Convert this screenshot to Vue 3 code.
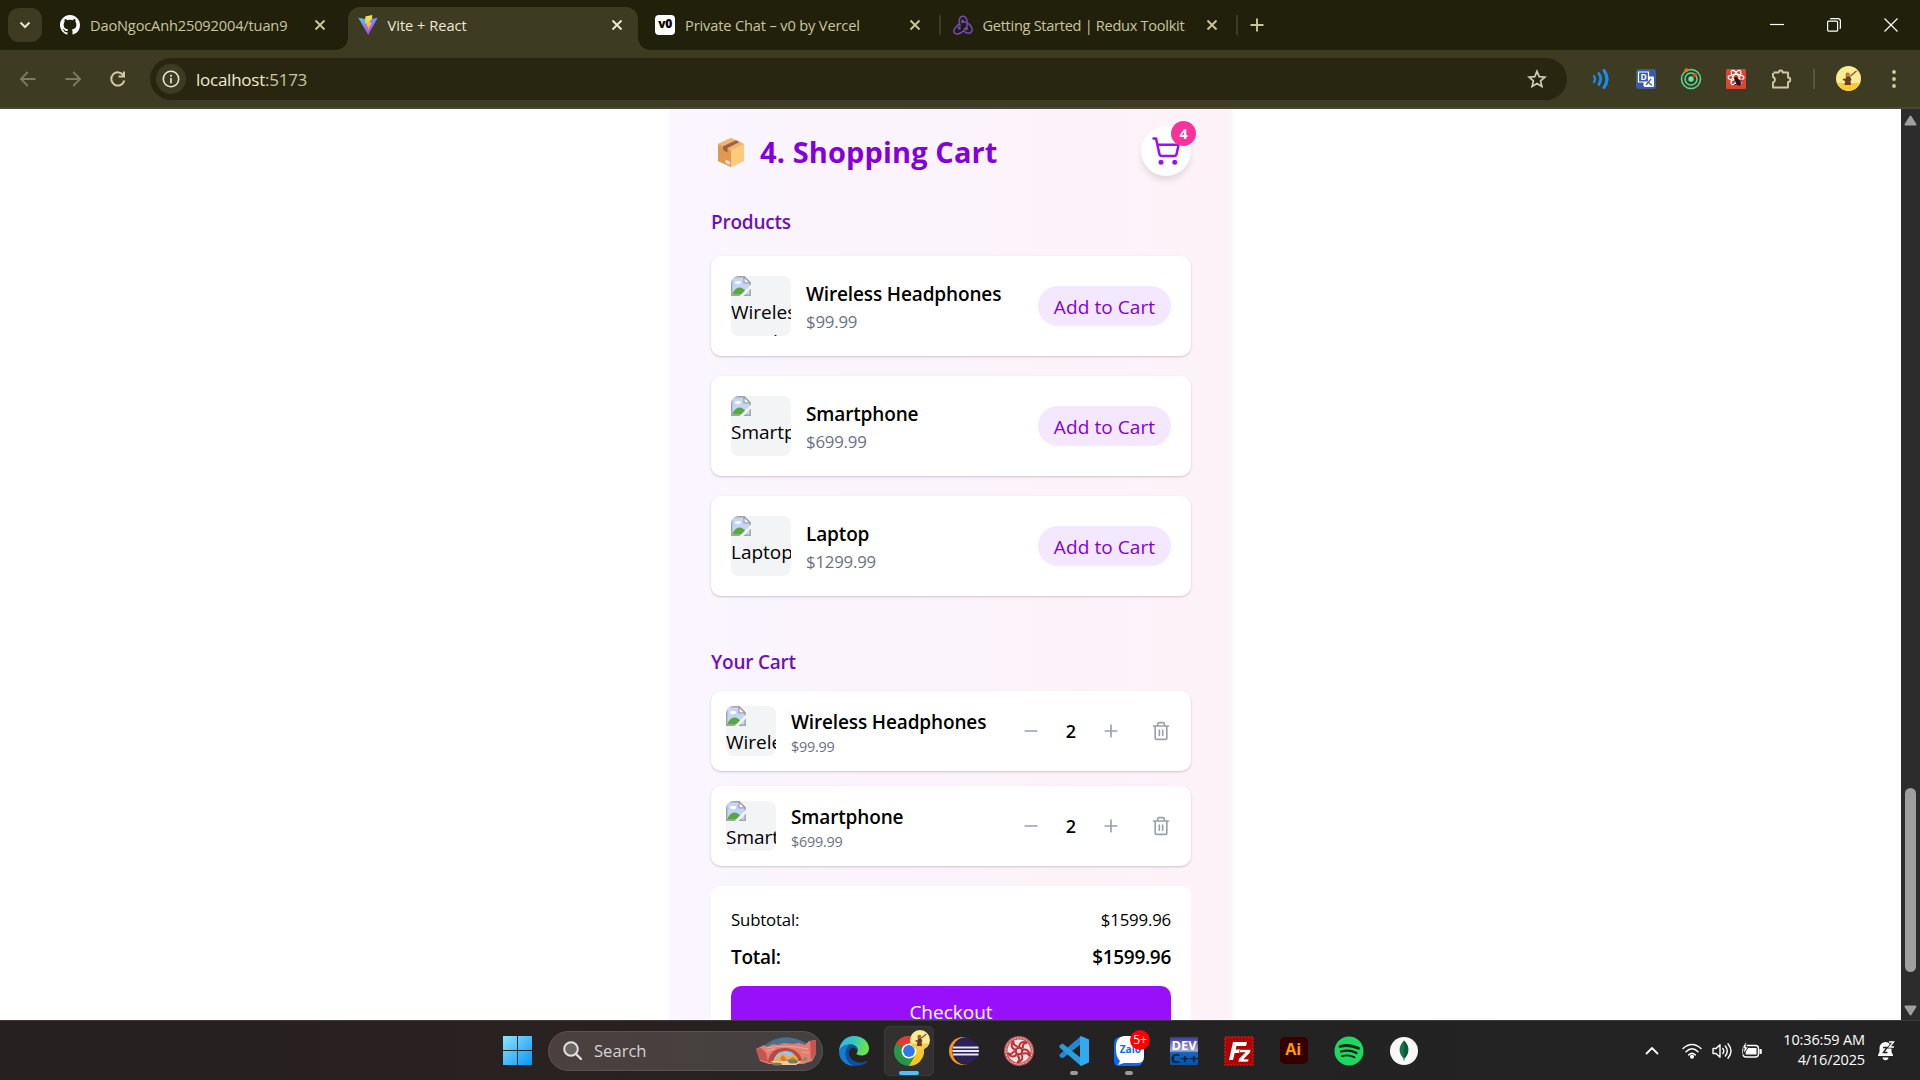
<script setup>
const tabs = [
  { title: 'DaoNgocAnh25092004/tuan9', icon: 'github' },
  { title: 'Vite + React', icon: 'vite', active: true },
  { title: 'Private Chat – v0 by Vercel', icon: 'v0', sep: true },
  { title: 'Getting Started | Redux Toolkit', icon: 'redux', sep: true }
]
const products = [
  { name: 'Wireless Headphones', price: '$99.99' },
  { name: 'Smartphone', price: '$699.99' },
  { name: 'Laptop', price: '$1299.99' }
]
const cart = [
  { name: 'Wireless Headphones', price: '$99.99', qty: 2 },
  { name: 'Smartphone', price: '$699.99', qty: 2 }
]
const blades = [0, 72, 144, 216, 288]
</script>

<template>
  <div class="screen">
    <header class="tabstrip">
      <button class="tab-search">
        <svg width="12" height="8" viewBox="0 0 12 8"><path d="M1.500 1.500 6 6l4.500-4.500" fill="none" stroke="#e9e6c4" stroke-width="2" /></svg>
      </button>
      <div v-for="t in tabs" :key="t.title" class="tab" :class="[t.icon, { active: t.active, sep: t.sep }]">
        <svg v-if="t.icon === 'github'" class="fav" viewBox="0 0 16 16"><path fill="#fff" d="M8 0C3.580 0 0 3.580 0 8c0 3.540 2.290 6.530 5.470 7.590.4.070.55-.17.55-.38 0-.19-.01-.82-.01-1.490-2.010.37-2.530-.49-2.690-.94-.09-.23-.48-.94-.82-1.130-.28-.15-.68-.52-.01-.53.63-.01 1.080.58 1.230.82.72 1.210 1.870.87 2.330.66.07-.52.28-.87.51-1.070-1.780-.2-3.640-.89-3.640-3.950 0-.87.31-1.590.82-2.150-.08-.2-.36-1.020.08-2.120 0 0 .67-.21 2.200.82.64-.18 1.320-.27 2-.27s1.360.09 2 .27c1.530-1.040 2.200-.82 2.200-.82.44 1.100.16 1.920.08 2.120.51.56.82 1.270.82 2.150 0 3.070-1.870 3.750-3.650 3.950.29.25.54.73.54 1.480 0 1.070-.01 1.930-.01 2.200 0 .21.15.46.55.38A8.010 8.010 0 0 0 16 8c0-4.420-3.580-8-8-8z" /></svg>
        <svg v-else-if="t.icon === 'vite'" class="fav" viewBox="0 0 20 20">
          <defs>
            <linearGradient id="va" x1="0" y1="0" x2=".6" y2="1"><stop offset="0" stop-color="#41d1ff" /><stop offset="1" stop-color="#bd34fe" /></linearGradient>
            <linearGradient id="vb" x1="0" y1="0" x2="0" y2="1"><stop offset="0" stop-color="#ffea53" /><stop offset="1" stop-color="#ffa800" /></linearGradient>
          </defs>
          <path d="M.3 2.800 10 4.400l9.700-1.600L10.200 20z" fill="url(#va)" />
          <path d="m14.300.1-6.900 1.400-.5 7.300 2.300-.4-.7 3.300 1.900-.5-.9 5.400 4.300-8.800-2.300.3 1-3.300 1.400-.4z" fill="url(#vb)" />
        </svg>
        <span v-else-if="t.icon === 'v0'" class="fav v0-logo">v0</span>
        <svg v-else class="fav" viewBox="0 0 20 20" fill="none" stroke="#764abc" stroke-width="1.500" stroke-linecap="round">
          <path d="M13.600 13c1.500-6 .2-11.500-3.400-11.700C6.600 1.200 5 5.800 7 10.200" />
          <path d="M6.500 9C2 11.500-.3 16 1.500 18.100c2.200 2.300 8.600-.2 11-5.100" />
          <path d="M9.300 6.400c5.500.4 10.300 4.600 9.800 8.800-.6 3.700-4.800 4.100-8.100 1.100" />
          <circle cx="9.600" cy="6.500" r=".9" /><circle cx="6.200" cy="12.900" r=".9" /><circle cx="13.400" cy="13.600" r=".9" />
        </svg>
        <span class="tab-title">{{ t.title }}</span>
        <svg class="tab-close" viewBox="0 0 12 12"><path d="m1.500 1.500 9 9m0-9-9 9" stroke="currentColor" stroke-width="1.900" /></svg>
      </div>
      <svg class="new-tab" viewBox="0 0 14 14"><path d="M7 .5v13M.5 7h13" stroke="#c9c69e" stroke-width="1.900" /></svg>
      <div class="window-controls">
        <svg width="14" height="14" viewBox="0 0 14 14"><path d="M0 6.500h14" stroke="#fff" stroke-width="1.200" /></svg>
        <svg width="14" height="14" viewBox="0 0 14 14" fill="none" stroke="#fff" stroke-width="1.200"><rect x=".6" y="3.200" width="10" height="10" rx="1" /><path d="M3.200 1.200c.3-.4.8-.6 1.300-.6h6.400c1.400 0 2.500 1.100 2.500 2.500V9.500c0 .6-.3 1-.7 1.300" /></svg>
        <svg width="14" height="14" viewBox="0 0 14 14"><path d="m.5.5 13 13m0-13-13 13" stroke="#fff" stroke-width="1.200" /></svg>
      </div>
    </header>

    <div class="toolbar">
      <svg class="nav" viewBox="0 0 20 20"><path d="M17.500 10H3M9.800 3 2.900 10l6.900 7" fill="none" stroke="#7d7a5e" stroke-width="1.800" /></svg>
      <svg class="nav" viewBox="0 0 20 20"><path d="M2.500 10H17M10.200 3l6.900 7-6.900 7" fill="none" stroke="#7d7a5e" stroke-width="1.800" /></svg>
      <svg class="nav" viewBox="0 0 20 20"><path d="M15.500 6.500A6.600 6.600 0 1 0 16.300 11.500M16 2.500v5h-5.500" fill="none" stroke="#cfcca3" stroke-width="2" /></svg>
      <div class="omnibox">
        <span class="site-info"><svg width="18" height="18" viewBox="0 0 18 18"><circle cx="9" cy="9" r="7.700" fill="none" stroke="#e9e6cf" stroke-width="1.600" /><path d="M9 8v5.200M9 4.800v1.900" stroke="#e9e6cf" stroke-width="1.700" /></svg></span>
        <span class="url">localhost<span class="port">:5173</span></span>
        <svg class="star" viewBox="0 0 20 20"><path d="m10 2.300 2.200 5.300 5.700.5-4.300 3.800 1.300 5.600L10 14.500l-4.900 3 1.300-5.600-4.300-3.800 5.700-.5z" fill="none" stroke="#cfccb6" stroke-width="1.700" /></svg>
      </div>
      <div class="extensions">
        <svg viewBox="0 0 22 22" fill="none" stroke="#1a8cf0" stroke-linecap="round"><path d="M4 8q2 3 0 6" stroke-width="2.200" /><path d="M8.800 5.500q3.800 5.500 0 11" stroke-width="2.700" /><path d="M14 2.500q6 8.500 0 17" stroke-width="3.200" /></svg>
        <svg viewBox="0 0 22 22"><rect x="1" y="1" width="20" height="20" rx="2.500" fill="#3b5aa6" /><path d="M9.500 8.500H18a1 1 0 0 1 1 1V18a1 1 0 0 1-1 1H9.500l-1-1v-8.500z" fill="#fff" /><path d="M3.500 4h10v10h-10z" fill="#3b5aa6" stroke="#fff" stroke-width="1.200" /><text x="5.400" y="12" font-size="8.500" fill="#fff" class="bold">D</text><path d="m16 11-5 6m2-3 4 3.500" stroke="#3b5aa6" stroke-width="1.200" fill="none" /></svg>
        <svg viewBox="0 0 22 22" fill="none" stroke="#54db91" stroke-width="1.500"><circle cx="11" cy="11" r="9.500" /><circle cx="11" cy="11" r="6" /><circle cx="11" cy="11" r="2.700" fill="#5cf0a0" stroke="none" /><circle cx="6.400" cy="2.200" r="2" fill="#f36b21" stroke="none" /><circle cx="15" cy="7" r="2" fill="#f3471f" stroke="none" /></svg>
        <svg viewBox="0 0 22 22"><rect x="1" y="1" width="20" height="20" rx="1" fill="#dd4433" /><g fill="none" stroke="#fff" stroke-width="1.100"><ellipse cx="11" cy="9.500" rx="8" ry="3" /><ellipse cx="11" cy="9.500" rx="8" ry="3" transform="rotate(60 11 9.500)" /><ellipse cx="11" cy="9.500" rx="8" ry="3" transform="rotate(120 11 9.500)" /></g><ellipse cx="13" cy="14" rx="2.300" ry="4" fill="#2b1512" transform="rotate(-30 13 14)" /><circle cx="11" cy="10.500" r="1.700" fill="#2b1512" /><path d="m8.500 13 9-1m-8 5 7-3.500" stroke="#2b1512" /></svg>
        <svg viewBox="0 0 22 22"><path d="M3.500 4.500h5.200a2 2 0 0 1 4 0h5.300v5a2.200 2.200 0 0 1 0 4.500v5.500H3v-5a2.900 2.900 0 0 0 0-5.500V5" fill="none" stroke="#cfcca3" stroke-width="1.900" stroke-linejoin="round" /></svg>
      </div>
      <i class="toolbar-sep"></i>
      <svg class="avatar" viewBox="0 0 25 25"><circle cx="12.500" cy="12.500" r="12.500" fill="#faec93" /><path d="M1 17h23a12.500 12.500 0 0 1-23 0" fill="#fac934" /><path d="M10 10h4l1.500 4-1 1 .5 4H8.500l.7-4-2.700-1 1-1.500 2 .5z" fill="#6b3d20" /><circle cx="11.700" cy="8.700" r="2.200" fill="#b77a52" /><path d="m14.500 10 6-5" stroke="#8a4927" stroke-width="1.200" /></svg>
      <svg class="kebab" viewBox="0 0 6 20" fill="#cfcca3"><circle cx="3" cy="3" r="1.900" /><circle cx="3" cy="10" r="1.900" /><circle cx="3" cy="17" r="1.900" /></svg>
    </div>

    <main class="viewport">
      <div class="page">
        <section class="panel">
          <div class="panel-head">
            <svg class="box" viewBox="0 0 26 29"><path d="M13 0 26 6v17l-13 6L0 23V6z" fill="#ffc36f" /><path d="M0 6l13 6v17L0 23z" fill="#e0994e" /><path d="M13 12 26 6v17l-13 6z" fill="#ffca7c" /><path d="M13 0 26 6l-13 6L0 6z" fill="#f2b56d" /><path d="m5 8.300 13-6 3.500 1.600-12 6v4.600L5 12z" fill="#9c5f4b" /><path d="M7.500 21.500 12 23.500V27l-4.500-2z" fill="#d8dde5" /></svg>
            <h2>4. Shopping Cart</h2>
            <div class="cart-badge">
              <svg width="30" height="30" viewBox="0 0 24 24" fill="none" stroke="#9810fa" stroke-width="2" stroke-linecap="round" stroke-linejoin="round"><path d="M2.050 2.050h2l2.660 12.420a2 2 0 0 0 2 1.580h9.780a2 2 0 0 0 1.950-1.570l1.650-7.430H5.120" /><circle cx="8" cy="21" r="1" fill="#9810fa" /><circle cx="19" cy="21" r="1" fill="#9810fa" /></svg>
              <b>4</b>
            </div>
          </div>

          <h3>Products</h3>
          <div class="product-list">
            <article v-for="p in products" :key="p.name" class="card product">
              <div class="thumb"><svg viewBox="0 0 20 20"><path d="M.7 1.600Q.7.700 1.600.7H13l6.200 6.200V19.300H.7z" fill="#c3d6f8" stroke="#a3a3a3" stroke-width="1.400" /><path d="M13 .7v6.200h6.200z" fill="#fff" stroke="#a3a3a3" stroke-width="1.400" /><ellipse cx="7" cy="6.500" rx="3" ry="1.700" fill="#fff" /><path d="M1.400 18.600c1-4 4-7 7-7 2.500 0 4.500 1.500 6 3.500v3.500z" fill="#57a93f" /><path d="M20 8.500v4L12.500 20H8.500z" fill="#f3f4f6" /></svg><p>{{ p.name }}</p></div>
              <div class="info"><h4>{{ p.name }}</h4><p>{{ p.price }}</p></div>
              <button class="add">Add to Cart</button>
            </article>
          </div>

          <h3 class="cart-title">Your Cart</h3>
          <div class="cart-list">
            <article v-for="c in cart" :key="c.name" class="card line">
              <div class="thumb small"><svg viewBox="0 0 20 20"><path d="M.7 1.600Q.7.700 1.600.7H13l6.200 6.200V19.300H.7z" fill="#c3d6f8" stroke="#a3a3a3" stroke-width="1.400" /><path d="M13 .7v6.200h6.200z" fill="#fff" stroke="#a3a3a3" stroke-width="1.400" /><ellipse cx="7" cy="6.500" rx="3" ry="1.700" fill="#fff" /><path d="M1.400 18.600c1-4 4-7 7-7 2.500 0 4.500 1.500 6 3.500v3.500z" fill="#57a93f" /><path d="M20 8.500v4L12.500 20H8.500z" fill="#f3f4f6" /></svg><p>{{ c.name }}</p></div>
              <div class="info"><h4>{{ c.name }}</h4><p>{{ c.price }}</p></div>
              <div class="stepper">
                <svg viewBox="0 0 24 24"><path d="M5 12h14" /></svg>
                <span>{{ c.qty }}</span>
                <svg viewBox="0 0 24 24"><path d="M5 12h14M12 5v14" /></svg>
                <svg class="trash" viewBox="0 0 24 24"><path d="M3 6h18M19 6v14c0 1-1 2-2 2H7c-1 0-2-1-2-2V6M8 6V4c0-1 1-2 2-2h4c1 0 2 1 2 2v2M10 11v6M14 11v6" /></svg>
              </div>
            </article>
          </div>

          <div class="summary">
            <div class="row"><span>Subtotal:</span><span>$1599.96</span></div>
            <div class="row total"><span>Total:</span><span>$1599.96</span></div>
            <button class="checkout">Checkout</button>
          </div>
        </section>
      </div>
      <div class="scrollbar">
        <svg width="13" height="11" viewBox="0 0 13 11"><path d="M6.500 1.500 11.500 9.500H1.500z" fill="#9f9f9f" stroke="#9f9f9f" stroke-width="2" stroke-linejoin="round" /></svg>
        <i class="thumb-bar"></i>
        <svg width="13" height="11" viewBox="0 0 13 11"><path d="M6.500 9.500 11.500 1.500H1.500z" fill="#9f9f9f" stroke="#9f9f9f" stroke-width="2" stroke-linejoin="round" /></svg>
      </div>
    </main>

    <footer class="taskbar">
      <svg class="start" viewBox="0 0 29 29"><defs><linearGradient id="win" x1="0" y1="0" x2="1" y2="1"><stop offset="0" stop-color="#8be3ff" /><stop offset="1" stop-color="#0a95f5" /></linearGradient></defs><path d="M0 0h14v14H0zM15 0h14v14H15zM0 15h14v14H0zM15 15h14v14H15z" fill="url(#win)" /></svg>
      <div class="search">
        <svg width="19" height="19" viewBox="0 0 19 19" fill="none" stroke="#e2e0e0" stroke-width="2" stroke-linecap="round"><circle cx="8" cy="8" r="6.800" fill="#6a6665" /><path d="m13 13 5 5" stroke-width="2.400" /></svg>
        <span>Search</span>
        <svg class="arch" viewBox="0 0 60 30"><path d="M9 9Q28-6 52 8v12H9z" fill="#4b6f8f" /><path d="M0 13 8 9l3 2 6-3 5 1 6-2 8 1 7-1 6 2 4-4 7-1v14l-4 7-9 3H13L4 25z" fill="#e08073" /><path d="M0 13l5-1 5 5 2 9-8-2zM54 5l6-1v14l-5 6z" fill="#c65552" /><path d="M10 12q20-4 42 1M11 15q4-2 8-2M46 16l7 1" stroke="#f2a896" fill="none" /><path d="M12 26c1-10 8-14 17-14s15 5 17 12l-3 3H14z" fill="#b9483f" /><path d="M17 27c1-8 6-12 13-12 6 0 10 4 12 10l-3 3z" fill="#8ec7ef" /><path d="m17 25 6-5 4-3 5 4 5-3 4 3 2 5-8 3H18z" fill="#f1a94e" /><path d="m24 22 3-3 4 5 6-3 4 3-3 2H26z" fill="#d97e2b" /><path d="M14 25h32l-6 4H22z" fill="#f2cba9" /><ellipse cx="37" cy="25.500" rx="5" ry="2" fill="#6e8355" /><ellipse cx="21" cy="28" rx="5" ry="1.600" fill="#6e8355" /><ellipse cx="49" cy="23" rx="2.500" ry="2" fill="#7f9561" /></svg>
      </div>
      <div class="apps">
        <div class="app"><svg viewBox="0 0 30 30"><defs><linearGradient id="ea" x1="0" y1="0" x2="1" y2=".3"><stop offset="0" stop-color="#2bb6ee" /><stop offset=".5" stop-color="#35c6c4" /><stop offset="1" stop-color="#6be34a" /></linearGradient></defs><path d="M0 16C0 7 6 0 15 0s15 6 15 12.500c0 4.500-3.500 7-7.500 7-3.500 0-5-1.200-5-2 0-.9 1.200-1.300 1.200-3.500 0-3-3-5.500-7-5.500C6 8.500 1.500 11 0 16z" fill="url(#ea)" /><path d="M0 16C1 11.500 6 8.500 11.700 8.500c-3 1.500-5 5-5 9C6.700 24 12 30 17 30h-2C6.500 30 0 23.500 0 16z" fill="#137bd0" /><path d="M12.500 12C10 14 9.500 17 10 19c1.500 5 7 7.500 12 7.500 3 0 5.500-1.500 6-1.500.7 0 .6.600.2 1.100C25.500 29 20 30 17 30 10 29 6.700 23 6.700 17.500c0-4 2-7 5-9 4 0 7 2.500 7 5.500 0 .5-.1 1-.3 1.500-1-2.500-3.500-4.500-5.900-3.500z" fill="#0b50a0" /></svg></div>
        <div class="app current">
          <svg viewBox="0 0 30 30"><circle cx="15" cy="15" r="15" fill="#279847" /><path d="M15 15 2 7.500a15 15 0 0 1 26 0z" fill="#e33b2e" /><path d="M15 7.500h13A15 15 0 0 1 15 30l6.500-11.250z" fill="#fcc61d" /><circle cx="15" cy="15" r="7.500" fill="#fff" /><circle cx="15" cy="15" r="5.900" fill="#2f78e8" /></svg>
          <svg class="profile" viewBox="0 0 25 25"><circle cx="12.500" cy="12.500" r="12.500" fill="#faec93" /><path d="M1 17h23a12.500 12.500 0 0 1-23 0" fill="#f3cb48" /><path d="M10 10h4l1.500 4-1 1 .5 5H8.500l.7-5-2.700-1 1-1.500 2 .5z" fill="#6b3d20" /><circle cx="11.700" cy="8.500" r="2.500" fill="#a0683f" /><path d="m14.500 10 6-5" stroke="#8a4927" stroke-width="1.400" /></svg>
          <i class="line-current"></i>
        </div>
        <div class="app"><svg viewBox="0 0 30 30"><circle cx="14" cy="15" r="14" fill="#f7941e" /><circle cx="17" cy="15" r="13.700" fill="#242222" /><circle cx="17" cy="15" r="12.800" fill="#2c2255" /><path d="M4 10.500h25.500v2H4zM3.500 14h26.500v2H3.500zM4 17.500h25.500v2H4z" fill="#e8e6f2" /></svg></div>
        <div class="app"><svg viewBox="0 0 30 30"><circle cx="15" cy="15" r="15" fill="#c25658" /><circle cx="15" cy="15" r="13.200" fill="none" stroke="#e8d4d4" stroke-width="1" stroke-dasharray="2 1" /><circle cx="15" cy="15" r="11.500" fill="#ece0e0" /><path v-for="a in blades" :key="a" :transform="`rotate(${a} 15 15)`" d="M15 11.200c0-4 3-6.400 8-4.500-3 0-4.500 2-4.200 5.800" fill="none" stroke="#b93337" stroke-width="2" /><circle cx="15" cy="15" r="3.300" fill="#ece0e0" stroke="#b93337" stroke-width="2.200" /></svg></div>
        <div class="app"><svg viewBox="0 0 30 30"><path d="M22 0v8L3.500 22.500.5 20.500v-2z" fill="#2189cf" /><path d="M22 30v-8L3.500 7.500.5 9.500v2z" fill="#2a9ce0" /><path d="M22 0 30 3.500v23L22 30l-1-1V1z" fill="#35a9ee" /></svg><i class="dot"></i></div>
        <div class="app"><svg viewBox="0 0 30 30"><path d="M7 1h16q6 0 6 7v15q0 7-6 7H5q-5 0-5-5V8q0-7 7-7z" fill="#0a68ff" /><path d="M10 0h13q7 0 7 7v14q0 6-7 6H10l-6 2 2-4q-4-4-4-11Q1 1 10 0z" fill="#fff" /><text x="5.800" y="17" font-size="10" fill="#0a68ff" class="bold">Zalo</text></svg><b class="count">5+</b><i class="dot"></i></div>
        <div class="app"><svg viewBox="0 0 30 30"><defs><linearGradient id="dv" x1="0" y1="0" x2="0" y2="1"><stop offset="0" stop-color="#35379c" /><stop offset=".5" stop-color="#a9afd3" /><stop offset=".55" stop-color="#1668bd" /><stop offset="1" stop-color="#0e4f9e" /></linearGradient></defs><path d="M1 1h28v28H1z" fill="url(#dv)" /><text x="2.500" y="14" font-size="11.500" fill="#fff" class="bold" textLength="25" lengthAdjust="spacingAndGlyphs">DEV</text><text x="1.500" y="26.500" font-size="13" fill="#0b2348" class="bold" textLength="28" lengthAdjust="spacingAndGlyphs">C++</text></svg></div>
        <div class="app"><svg viewBox="0 0 30 30"><rect x="1" y="1" width="28" height="28" fill="#b30000" stroke="#d21919" stroke-width="1.500" stroke-dasharray="2 1.200" /><path d="M9 6h14l-1 4h-9.500l-.8 3.500h6l-1 3.500h-6L9 24H5z" fill="#fff" /><path d="M16 13.500h11l-.8 3L20 23h5l-.8 3H14l.8-3.200 6.200-6.200h-5.800z" fill="#fff" stroke="#b30000" stroke-width=".7" /></svg></div>
        <div class="app"><svg viewBox="0 0 30 30"><rect x="1" y="1" width="28" height="27" rx="5" fill="#330000" /><text x="6.200" y="19" font-size="16.500" fill="#ff9a00" class="bold" textLength="16" lengthAdjust="spacingAndGlyphs">Ai</text></svg></div>
        <div class="app"><svg viewBox="0 0 30 30"><circle cx="15" cy="15" r="14.500" fill="#1ed760" /><g fill="none" stroke="#16251b" stroke-linecap="round"><path d="M6 10.500q9-2.700 18.500 1.800" stroke-width="2.800" /><path d="M7 15.500q8.500-2.200 15.500 1.500" stroke-width="2.300" /><path d="M8 20q7-1.700 12.500 1.300" stroke-width="1.900" /></g></svg></div>
        <div class="app"><svg viewBox="0 0 30 30"><circle cx="15" cy="15" r="14" fill="#f7f8f7" /><path d="M15 4.500c4.500 4.500 5.500 9.500 3 14.500-.8 1.600-1.600 2.600-2.500 3.300V24.500h-1v-2.200c-.9-.7-1.700-1.700-2.500-3.300-2.500-5-1.500-10 3-14.500z" fill="#11744b" /><path d="M15 4.500c4.500 4.500 5.500 9.500 3 14.500-.8 1.600-1.600 2.600-3 3.300z" fill="#0a5a3c" /></svg></div>
      </div>
      <div class="tray">
        <svg class="caret" viewBox="0 0 14 9"><path d="m1 8 6-6 6 6" fill="none" stroke="#fff" stroke-width="1.800" /></svg>
        <svg class="ti" viewBox="0 0 20 20" fill="none" stroke="#fff" stroke-width="1.500" stroke-linecap="round"><path d="M1 7.500q9-8 18 0M4 10.800q6-6 12 0M6.800 13.900q3.200-3 6.400 0" /><circle cx="10" cy="15.800" r="1.300" fill="#fff" /></svg>
        <svg class="ti" viewBox="0 0 20 20" fill="none" stroke="#fff" stroke-width="1.400" stroke-linecap="round" stroke-linejoin="round"><path d="M1 7.500h3L8 3.700v12.600L4 12.500H1z" /><path d="M10.800 7.500q2 2.500 0 5M13.300 5q4 5 0 10M16 2.700q6 7.300 0 14.600" /></svg>
        <svg class="ti" viewBox="0 0 20 20"><rect x="1" y="4.500" width="15.500" height="11.500" rx="3" fill="none" stroke="#fff" stroke-width="1.400" /><path d="M4 7h10.500v6.500H3.500z" fill="#fff" /><path d="M17.500 8h1.300q1 0 1 1v3q0 1-1 1h-1.300z" fill="#fff" /><path d="M4.500-.5 0 7h2.200L1 13.500l5.500-7.500H4z" fill="#fff" stroke="#232323" stroke-width="1" /></svg>
        <div class="clock"><span>10:36:59 AM</span><span>4/16/2025</span></div>
        <svg class="bell" viewBox="0 0 18 20"><path d="M1 15v-1l1.500-3V7a6 6 0 0 1 12 0v4l1.500 3v1zM5.500 16.500h6q-.5 2.800-3 2.800t-3-2.800z" fill="#fff" /><path d="M12 1h4.500L12.500 6h4.500" fill="none" stroke="#232323" stroke-width="3" /><path d="M12 1h4.500L12.500 6h4.500" fill="none" stroke="#fff" stroke-width="1.400" /><path d="M6 6.500h4L6.500 11.500h4" fill="none" stroke="#232323" stroke-width="1.500" /></svg>
      </div>
    </footer>
  </div>
</template>

<style>
body { background: #fff; overflow: hidden; }
</style>

<style scoped>
* { box-sizing: border-box; margin: 0; }
svg { display: block; flex: none; }
.bold { font-weight: 700; }
.screen { width: 1920px; height: 1080px; display: flex; flex-direction: column; overflow: hidden; font-family: "Open Sans", "Noto Sans", sans-serif; font-size: 19px; color: #000; }
button { border: 0; padding: 0; font: inherit; letter-spacing: inherit; }

.tabstrip { height: 50px; flex: none; background: #21200b; display: flex; align-items: center; padding-left: 8px; }
.tab-search { width: 34px; height: 34px; border-radius: 11px; background: #3d3b22; display: grid; place-items: center; margin-right: 6px; }
.tab { position: relative; width: 297.5px; height: 50px; display: flex; align-items: center; padding: 0 20px 0 12px; color: #c9c69e; font-size: 14.6px; letter-spacing: -.27px; }
.tab.github { letter-spacing: -.15px; }
.tab.v0 { letter-spacing: -.14px; }
.tab.vite { letter-spacing: 0; }
.tab.redux { letter-spacing: -.3px; }
.tab > * { position: relative; }
.tab.active { color: #eeebd2; }
.tab.active::before { content: ""; position: absolute; left: 2.5px; right: 5px; top: 7px; bottom: 0; background: #3d3b22; border-radius: 12px 12px 0 0; }
.tab.active::after { content: ""; position: absolute; left: -9.5px; right: -7px; bottom: 0; height: 12px; background: radial-gradient(circle at 0 0, transparent 11.5px, #3d3b22 12px) left / 12px 12px no-repeat, radial-gradient(circle at 100% 0, transparent 11.5px, #3d3b22 12px) right / 12px 12px no-repeat; }
.tab.sep::before { content: ""; position: absolute; right: 0; top: 15px; width: 2px; height: 20px; background: #3d3b22; }
.fav { width: 20px; height: 20px; margin-right: 10px; flex: none; }
.v0-logo { background: #fff; border-radius: 4px; color: #000; font-size: 12px; font-weight: 800; line-height: 18px; text-align: center; letter-spacing: -.5px; }
.tab-title { flex: 1; white-space: nowrap; }
.tab-close { width: 12px; height: 12px; }
.new-tab { width: 14px; height: 14px; margin-left: 12px; }
.window-controls { margin-left: auto; display: flex; gap: 43px; padding-right: 22px; }

.toolbar { height: 59px; flex: none; background: #3d3b22; border-bottom: 2px solid #4a473a; display: flex; align-items: center; padding-left: 18px; }
.nav { width: 20px; height: 20px; margin-right: 25px; }
.omnibox { width: 1417px; height: 42px; border-radius: 21px; background: #282610; display: flex; align-items: center; padding: 0 20px 0 6px; margin-left: -3px; }
.site-info { width: 30px; height: 30px; border-radius: 50%; background: #3d3b22; display: grid; place-items: center; margin-right: 10px; }
.url { flex: 1; font-size: 17px; letter-spacing: -.25px; color: #eeebd2; padding-top: 1px; }
.port { color: #c9c6a2; }
.star { width: 20px; height: 20px; }
.extensions { display: flex; gap: 23px; margin-left: 22.5px; }
.extensions svg { width: 22px; height: 22px; }
.toolbar-sep { width: 2px; height: 20px; background: #5a573c; margin: 0 21px; }
.avatar { width: 25px; height: 25px; }
.kebab { width: 6px; height: 20px; margin-left: 30px; }

.viewport { height: 911px; flex: none; display: flex; overflow: hidden; background: #fff; }
.page { flex: 1; display: flex; justify-content: center; }
.panel { width: 560px; height: 1000px; padding: 17px 40px 0; margin-left: 1px; background: linear-gradient(to right, #faf5ff, #fdf2f8); box-shadow: 0 0 6px rgba(0, 0, 0, .07); }
.panel-head { height: 50px; display: flex; align-items: center; }
.box { width: 26px; height: 29px; margin: 3px 16px 0 7px; }
h2 { font-size: 29px; font-weight: 700; color: #8200db; letter-spacing: .12px; flex: 1; padding-top: 1px; }
.cart-badge { position: relative; width: 50px; height: 50px; border-radius: 50%; background: #fff; display: grid; place-items: center; box-shadow: 0 5px 7px -1px rgba(0, 0, 0, .12); }
.cart-badge b { position: absolute; right: -5px; top: -5px; width: 25px; height: 25px; border-radius: 50%; background: #f6339a; color: #fff; font-size: 14.3px; line-height: 25px; text-align: center; }
h3 { font-size: 19px; font-weight: 600; line-height: 30px; color: #6e11b0; margin: 31px 0 19px; letter-spacing: -.22px; }
.cart-title { margin: 51px 0 14px; }
.product-list { display: grid; gap: 20px; }
.cart-list { display: grid; gap: 15px; }
.card { background: #fff; border-radius: 10px; display: flex; align-items: center; box-shadow: 0 1px 3px rgba(0, 0, 0, .1), 0 1px 2px rgba(0, 0, 0, .1); }
.product { height: 100px; padding: 0 20px; }
.line { height: 80px; padding: 0 15px; }
.thumb { width: 60px; height: 60px; border-radius: 8px; background: #f3f4f6; overflow: hidden; line-height: 30px; margin-right: 15px; flex: none; }
.thumb.small { width: 50px; height: 50px; }
.thumb svg { width: 20px; height: 20px; }
.thumb p { padding-top: 1px; }
.info { flex: 1; }
h4 { font-size: 19px; font-weight: 600; line-height: 30px; letter-spacing: -.14px; white-space: nowrap; }
.info p { font-size: 16.8px; line-height: 25px; color: #6a7282; letter-spacing: -.2px; }
.line .info { padding-top: 2px; }
.line .info p { font-size: 14.4px; line-height: 20px; letter-spacing: -.25px; }
.add { width: 133px; height: 40px; border-radius: 20px; background: #f3e8ff; color: #8200db; padding-top: 1px; letter-spacing: .08px; }
.stepper { display: flex; align-items: center; padding-right: 5px; }
.stepper svg { width: 20px; height: 20px; fill: none; stroke: #99a1af; stroke-width: 2; stroke-linecap: round; stroke-linejoin: round; }
.stepper span { width: 60px; text-align: center; font-weight: 600; font-size: 18px; }
.stepper .trash { margin-left: 30px; }
.summary { margin-top: 20px; background: #fff; border-radius: 10px; padding: 21px 20px; height: 200px; }
.row { display: flex; justify-content: space-between; font-size: 16.8px; line-height: 25px; letter-spacing: -.18px; }
.total { font-size: 19px; font-weight: 600; line-height: 30px; margin-top: 10px; letter-spacing: -.3px; }
.checkout { width: 100%; height: 50px; margin-top: 14px; padding-top: 1px; background: #9810fa; color: #fff; border-radius: 10px; }
.scrollbar { width: 19px; background: #2c2c2c; display: flex; flex-direction: column; align-items: center; padding: 6px 0 4px; }
.thumb-bar { width: 11px; height: 184px; border-radius: 6px; background: #9f9f9f; margin: 662px 0 auto; }

.taskbar { height: 60px; flex: none; background: linear-gradient(90deg, #262020, #2a2121 30%, #242222 45%, #232323); border-top: 1px solid #3b3939; display: flex; align-items: center; padding-left: 503px; }
.start { width: 29px; height: 29px; }
.search { width: 275px; height: 40px; margin-left: 16px; border-radius: 20px; border: 1px solid #5a5352; background: linear-gradient(90deg, #4b403f, #434140); display: flex; align-items: center; padding: 0 6px 0 14px; color: #d6d4d3; font-size: 16.6px; }
.search span { flex: 1; margin-left: 12px; }
.arch { width: 60px; height: 30px; }
.apps { display: flex; gap: 5px; margin-left: 6px; }
.app { position: relative; width: 50px; height: 50px; border-radius: 5px; display: grid; place-items: center; }
.app > svg { width: 30px; height: 30px; }
.current { background: #333030; border: 1px solid #3c3939; }
.app .profile { position: absolute; width: 20px; height: 20px; left: 25px; top: 3px; }
.line-current { position: absolute; left: 14px; bottom: 0; width: 20px; height: 4px; border-radius: 2px; background: #4cc2ff; }
.dot { position: absolute; left: 21px; bottom: 1px; width: 8px; height: 4px; border-radius: 2px; background: #9a9a9a; }
.count { position: absolute; left: 26px; top: 4px; width: 20px; height: 20px; border-radius: 50%; background: #f00; color: #fff; font-size: 12px; font-weight: 400; line-height: 20px; text-align: center; }
.tray { margin-left: auto; display: flex; align-items: center; padding-right: 25px; color: #fff; }
.caret { width: 14px; height: 9px; margin-right: 23px; }
.ti { width: 20px; height: 20px; margin-right: 10px; }
.clock { display: flex; flex-direction: column; align-items: flex-end; font-size: 14.5px; line-height: 20px; letter-spacing: -.15px; margin: -2px 12px 0 11px; white-space: nowrap; }
.bell { width: 18px; height: 20px; }
</style>
